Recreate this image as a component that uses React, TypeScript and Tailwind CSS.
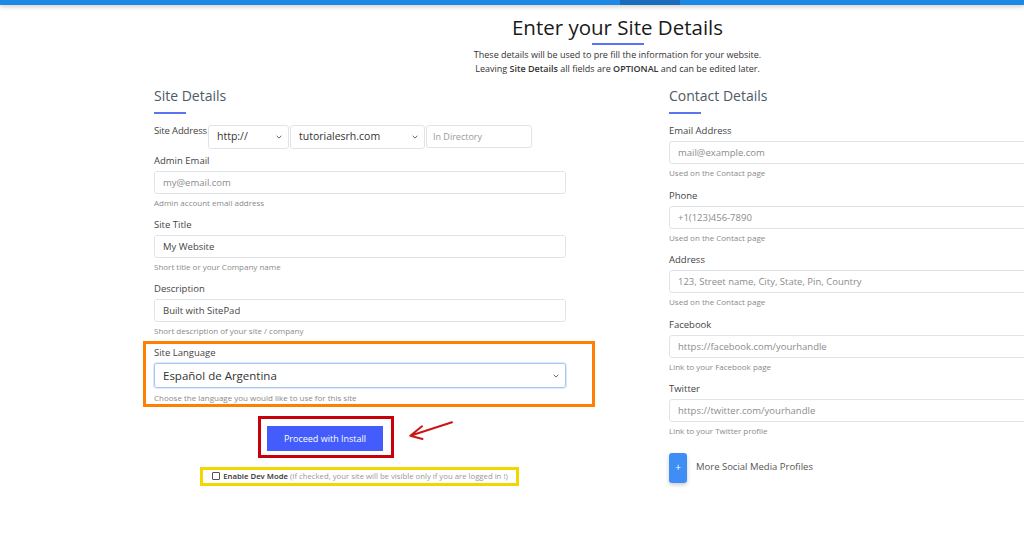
import React from "react";

const CONTACT = [
  { label: "Email Address", placeholder: "mail@example.com", help: "Used on the Contact page" },
  { label: "Phone", placeholder: "+1(123)456-7890", help: "Used on the Contact page" },
  { label: "Address", placeholder: "123, Street name, City, State, Pin, Country", help: "Used on the Contact page" },
  { label: "Facebook", placeholder: "https://facebook.com/yourhandle", help: "Link to your Facebook page" },
  { label: "Twitter", placeholder: "https://twitter.com/yourhandle", help: "Link to your Twitter profile" },
];

function Chevron() {
  return (
    <svg width="6" height="4" viewBox="0 0 6 4" className="shrink-0 text-[#555]">
      <path d="M0.6 0.7 L3 3.1 L5.4 0.7" fill="none" stroke="currentColor" strokeWidth="0.9" />
    </svg>
  );
}

function SectionTitle({ children }: { children: React.ReactNode }) {
  return (
    <div>
      <h2 className="text-[14px] leading-[20px] text-[#4e5966]">{children}</h2>
      <div className="mt-[6px] h-[2px] w-[32px] bg-[#5b74f1]" />
    </div>
  );
}

function Field({
  label,
  value,
  placeholder,
  help,
}: {
  label: string;
  value?: string;
  placeholder?: string;
  help: string;
}) {
  return (
    <div>
      <label className="block text-[9.5px] leading-[14px] text-[#444]">{label}</label>
      <input
        readOnly
        defaultValue={value}
        placeholder={placeholder}
        className="mt-[3px] h-[23px] w-full rounded-[3px] border border-[#e0e4e9] bg-white px-[8px] text-[9.5px] text-[#444] outline-none placeholder:text-[#8c8c8c]"
      />
      <p className="mt-[4px] text-[8px] leading-[10px] text-[#8a8a8a]">{help}</p>
    </div>
  );
}

export default function App() {
  return (
    <div className="h-[544px] w-[1024px] overflow-hidden bg-white font-['Open_Sans','Liberation_Sans',sans-serif] text-[#444]">
      {/* top bar */}
      <div className="flex h-[5px] bg-[#1e88e5] shadow-[0_2px_4px_rgba(0,0,0,0.18)]">
        <div className="ml-[620px] w-[60px] bg-[#1a6cbc]" />
      </div>

      <main className="ml-[154px] w-[927px]">
        <div className="mt-[8px] flex flex-col items-center text-center">
          <h1 className="text-[20.5px] font-normal leading-[28px] text-[#1a1a1a]">Enter your Site Details</h1>
          <div className="mt-[2px] h-[2px] w-[52px] bg-[#5b74f1]" />
          <p className="mt-[3px] text-[9px] leading-[14px] text-[#333]">
            These details will be used to pre fill the information for your website.
            <br />
            Leaving <b className="font-semibold">Site Details</b> all fields are{" "}
            <b className="font-semibold">OPTIONAL</b> and can be edited later.
          </p>
        </div>

        <div className="mt-[10px] flex gap-[103px]">
          {/* Left: site details */}
          <section className="w-[412px] shrink-0">
            <SectionTitle>Site Details</SectionTitle>

            <div className="mt-[10px] flex items-start">
              <span className="w-[54px] whitespace-nowrap text-[9.5px] leading-[14px] tracking-[-0.15px] text-[#444]">
                Site Address
              </span>
              <div className="mt-[1px] flex">
                <div className="flex h-[24px] w-[81px] items-center justify-between rounded-[3px] border border-[#e0e4e9] pl-[8px] pr-[6px] text-[10.5px] text-[#333]">
                  http://
                  <Chevron />
                </div>
                <div className="ml-[1px] flex h-[24px] w-[135px] items-center justify-between rounded-[3px] border border-[#e0e4e9] pl-[8px] pr-[6px] text-[10.5px] text-[#333]">
                  tutorialesrh.com
                  <Chevron />
                </div>
                <input
                  readOnly
                  placeholder="In Directory"
                  className="ml-[1px] h-[23px] w-[106px] rounded-[3px] border border-[#e0e4e9] px-[6px] text-[9px] outline-none placeholder:text-[#999]"
                />
              </div>
            </div>

            <div className="mt-[5px] flex flex-col gap-[10px]">
              <Field label="Admin Email" placeholder="my@email.com" help="Admin account email address" />
              <Field label="Site Title" value="My Website" help="Short title or your Company name" />
              <Field label="Description" value="Built with SitePad" help="Short description of your site / company" />

              <div className="relative">
                <div className="pointer-events-none absolute -top-[5.5px] -bottom-[4.5px] -left-[11px] -right-[29px] border-[3px] border-[#ff7f00]" />
                <label className="block text-[9.5px] leading-[14px] text-[#444]">Site Language</label>
                <div className="mt-[3px] flex h-[25px] items-center justify-between rounded-[3px] border border-[#a9c8f3] pl-[8px] pr-[6px] text-[11.5px] text-[#333] shadow-[0_0_0_1px_#dce9fb]">
                  Español de Argentina
                  <Chevron />
                </div>
                <p className="mt-[4.5px] text-[8px] leading-[10px] text-[#8a8a8a]">
                  Choose the language you would like to use for this site
                </p>
              </div>
            </div>

            <div className="relative mt-[21.5px] ml-[113px] w-[116px]">
              <div className="pointer-events-none absolute -top-[8px] -bottom-[7px] -left-[9.5px] -right-[11px] border-[3px] border-[#c8000c]" />
              <button className="h-[25px] w-[116px] bg-[#435cfb] text-[9px] text-white">Proceed with Install</button>
              <svg
                width="50"
                height="24"
                viewBox="0 0 50 24"
                className="absolute left-[140px] top-[-5px] text-[#cc1515]"
              >
                <path
                  d="M45 3.3 L3.3 16.7 M3.3 16.7 L15 7.3 M3.3 16.7 L15.5 20"
                  fill="none"
                  stroke="currentColor"
                  strokeWidth="2"
                  strokeLinecap="round"
                />
              </svg>
            </div>

            <div className="mt-[18.5px] flex justify-center">
              <div className="relative flex h-[12px] items-center">
                <div className="pointer-events-none absolute -top-[3px] -bottom-[4px] -left-[12px] -right-[11px] border-[3px] border-[#f2d600]" />
                <span className="h-[8px] w-[8px] rounded-[1px] border border-[#555] bg-white" />
                <span className="ml-[3px] text-[7.75px] leading-[12px]">
                  <span className="font-semibold text-[#333]">Enable Dev Mode</span>{" "}
                  <span className="text-[#999]">(If checked, your site will be visible only if you are logged in !)</span>
                </span>
              </div>
            </div>
          </section>

          {/* Right: contact details */}
          <section className="w-[412px] shrink-0">
            <SectionTitle>Contact Details</SectionTitle>
            <div className="mt-[10px] flex flex-col gap-[10.5px]">
              {CONTACT.map((c) => (
                <Field key={c.label} label={c.label} placeholder={c.placeholder} help={c.help} />
              ))}
            </div>
            <div className="mt-[16.5px] flex items-center">
              <button className="flex h-[30px] w-[18px] items-center justify-center rounded-[3px] bg-[#3f8ef5] text-[10px] text-white shadow-[0_2px_4px_rgba(0,0,0,0.2)]">
                +
              </button>
              <span className="ml-[9px] text-[9.5px] font-medium text-[#555]">More Social Media Profiles</span>
            </div>
          </section>
        </div>
      </main>
    </div>
  );
}
